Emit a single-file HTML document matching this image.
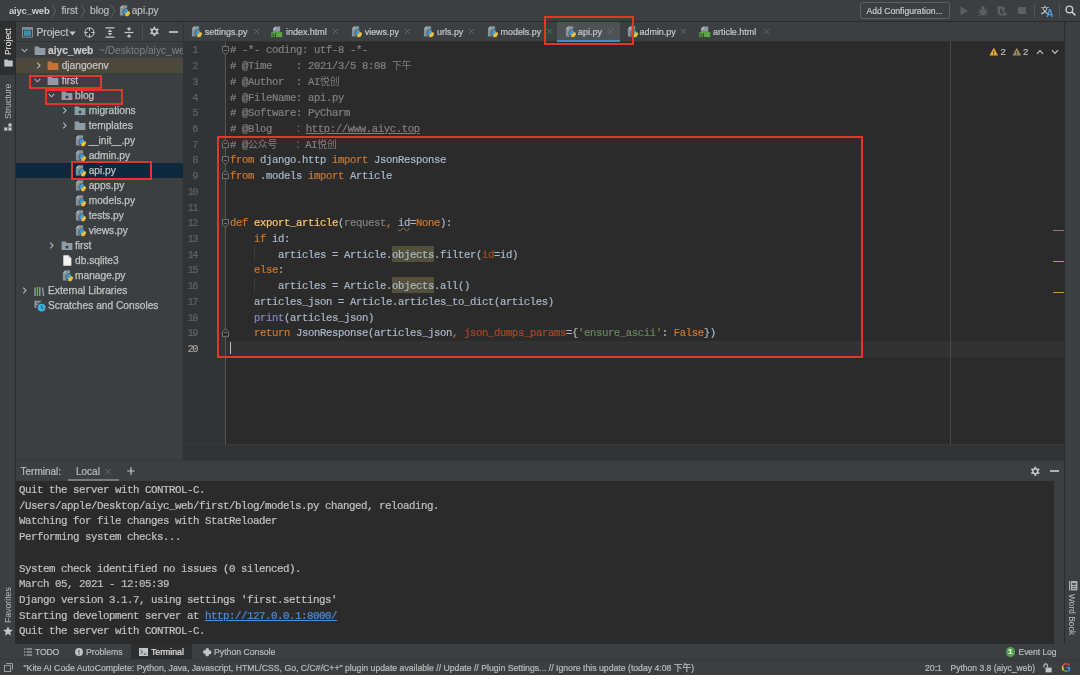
<!DOCTYPE html>
<html><head><meta charset="utf-8"><title>aiyc_web – api.py</title>
<style>
*{box-sizing:border-box;margin:0;padding:0}
html,body{width:1080px;height:675px;overflow:hidden;background:#3c3f41}
#app{position:absolute;left:0;top:0;width:1080px;height:675px;will-change:transform;background:#3c3f41;overflow:hidden}
body{position:relative;font-family:"Liberation Sans","Noto Sans CJK SC",sans-serif;font-size:10px;color:#bbbbbb}
.abs{position:absolute}
.mono{font-family:"Liberation Mono","Noto Sans CJK SC",monospace}
.t{position:absolute;white-space:pre;line-height:12px;height:12px;-webkit-text-stroke:0.2px currentColor}
svg{position:absolute;overflow:visible}
#nav{left:0;top:0;width:1080px;height:22px;background:#3c3f41;border-bottom:1px solid #2b2b2b}
#lstrip{left:0;top:22px;width:16px;height:622px;background:#3c3f41;border-right:1px solid #2b2b2b}
#rstrip{left:1064px;top:22px;width:16px;height:622px;background:#3c3f41;border-left:1px solid #2b2b2b}
.vt{position:absolute;white-space:nowrap;font-size:8.7px;line-height:10px;height:10px}
#proj{left:16px;top:22px;width:167px;height:438px;background:#3c3f41;overflow:hidden}
#pdiv{left:183px;top:22px;width:1px;height:438.5px;background:#313335}
.row{position:absolute;left:0;width:167px;height:15px}
.row .t{top:1.5px;font-size:10.2px;color:#c2c2c2;-webkit-text-stroke:0.25px #c2c2c2}
#tabs{left:184px;top:22px;width:880px;height:20px;background:#3c3f41;border-bottom:1px solid #323232}
.tab{position:absolute;top:0;height:19px}
.tab .t{top:4px;font-size:9.1px;color:#bbbbbb}
#editor{left:184px;top:42px;width:880px;height:402px;background:#2b2b2b;overflow:hidden}
#gutter{left:0;top:0;width:41px;height:402px;background:#313335}
#gline{left:41px;top:0;width:1px;height:402px;background:#555555}
.ln{position:absolute;left:0;width:12.9px;text-align:right;font-size:10.4px;letter-spacing:-1.5px;-webkit-text-stroke:0.2px currentColor;line-height:12px;color:#606366}
.cl{position:absolute;left:46px;font-size:10.6px;letter-spacing:-0.36px;line-height:12px;height:12px;white-space:pre;color:#a9b7c6;-webkit-text-stroke:0.2px currentColor}
.k{color:#cc7832}.c{color:#808080}.f{color:#ffc66d}.s{color:#6a8759}.a{color:#aa4926}.b{color:#8888c6}.g{color:#808080}
.z{font-size:9.8px;letter-spacing:0;-webkit-text-stroke:0}
.hl{background:#52503a;padding:2.7px 0 1.1px}
#ebot{left:184px;top:444px;width:880px;height:16.5px;background:#313335;border-top:1px solid #37393b}
#thead{left:16px;top:460px;width:1048px;height:21px;background:#3c3f41;border-top:1px solid #353739}
#term{left:16px;top:481px;width:1048px;height:163px;background:#2b2b2b}
.tl{position:absolute;left:3px;font-size:10.8px;letter-spacing:-0.48px;line-height:12px;height:12px;white-space:pre;color:#c0c0c0;-webkit-text-stroke:0.2px currentColor}
#tools{left:0;top:643.8px;width:1080px;height:16.2px;background:#3c3f41}
#tools .t{font-size:8.7px;top:1.8px}
#status{left:0;top:658.6px;width:1080px;height:16.4px;background:#3c3f41;border-top:1px solid #36383a}
#status .t{font-size:8.7px;top:2.1px}
.red{position:absolute;border:2.3px solid #e5352b}
</style></head><body><div id="app">
<div id="nav" class="abs">
<div class="t " style="left:9px;top:4.5px;font-size:9.4px;letter-spacing:-0.15px;font-weight:bold;color:#cfcfcf;-webkit-text-stroke:0">aiyc_web</div>
<div class="t " style="left:61.5px;top:4.5px;font-size:10.2px">first</div>
<div class="t " style="left:90px;top:4.5px;font-size:10.2px">blog</div>
<svg style="left:119.3px;top:5px" width="12" height="12" viewBox="0 0 12 12"><path d="M3.5 0.2 H8.1 V10.5 H0.9 V2.8 Z" fill="#87929a"/> <path d="M0.9 2.8 L3.5 0.2 V2.8 Z" fill="#b9c1c7"/> <g fill="#3c3f41" stroke="#3c3f41" stroke-width="1.2"><rect x="5.2" y="4.1" width="3.7" height="3.5" rx="1.2"/><rect x="4.2" y="5.8" width="3.1" height="3.3" rx="1.2"/><rect x="6.2" y="7.8" width="3.7" height="3.5" rx="1.2"/><rect x="7.8" y="6.3" width="3.1" height="3.3" rx="1.2"/></g> <g fill="#3d9ad3"><rect x="5.2" y="4.1" width="3.7" height="3.5" rx="1.2"/><rect x="4.2" y="5.8" width="3.1" height="3.3" rx="1.2"/></g> <g fill="#f0bf3a"><rect x="6.2" y="7.8" width="3.7" height="3.5" rx="1.2"/><rect x="7.8" y="6.3" width="3.1" height="3.3" rx="1.2"/></g></svg>
<div class="t " style="left:131.8px;top:4.5px;font-size:10px">api.py</div>
<svg style="left:51.3px;top:4px" width="6" height="14" viewBox="0 0 6 14"><path d="M1 0.8 L4.8 7 L1 13.2" stroke="#5f6365" stroke-width="0.9" fill="none"/></svg>
<svg style="left:79.8px;top:4px" width="6" height="14" viewBox="0 0 6 14"><path d="M1 0.8 L4.8 7 L1 13.2" stroke="#5f6365" stroke-width="0.9" fill="none"/></svg>
<svg style="left:109.5px;top:4px" width="6" height="14" viewBox="0 0 6 14"><path d="M1 0.8 L4.8 7 L1 13.2" stroke="#5f6365" stroke-width="0.9" fill="none"/></svg>
<div class="abs" style="left:860px;top:2.2px;width:90px;height:16.5px;border:1px solid #5e6162;border-radius:2.5px"></div>
<div class="t " style="left:866.5px;top:4.5px;font-size:8.65px;color:#c8c8c8">Add Configuration...</div>
<svg style="left:958px;top:5px" width="12" height="12" viewBox="0 0 12 12"><path d="M2.5 1.5 L10 6 L2.5 10.5Z" fill="#5d6062"/></svg>
<svg style="left:977px;top:5px" width="12" height="12" viewBox="0 0 12 12"><ellipse cx="6" cy="7" rx="2.8" ry="3.6" fill="#5d6062"/><circle cx="6" cy="2.8" r="1.7" fill="#5d6062"/><path d="M1 4.5l2.5 1.5M11 4.5l-2.5 1.5M0.8 7.5h2.6M11.2 7.5h-2.6M1.2 10.8l2.4-1.4M10.8 10.8l-2.4-1.4" stroke="#5d6062" stroke-width="0.9"/></svg>
<svg style="left:996px;top:5px" width="13" height="12" viewBox="0 0 13 12"><path d="M1.5 1.2h4.2l3 1.6v3.4h-2.6v-2.6h-2v5h2v2.2h-1.2q-3.4 -1.4 -3.4 -5z" fill="#5d6062"/><path d="M7 6.6l4.6 2.5-4.6 2.5z" fill="#5d6062"/></svg>
<div class="abs" style="left:1018.4px;top:6.8px;width:7.7px;height:7.5px;background:#5d6062"></div>
<div class="abs" style="left:1034px;top:4px;width:1px;height:14px;background:#515456"></div>
<div class="t " style="left:1040.8px;top:4.0px;font-size:8.4px;color:#c8cacb;font-family:"Liberation Sans","Noto Sans CJK SC",sans-serif;font-weight:bold;-webkit-text-stroke:0">文</div>
<div class="t " style="left:1046.3px;top:7.6px;font-size:10px;color:#4a9fe0;font-weight:bold;-webkit-text-stroke:0">A</div>
<div class="abs" style="left:1059px;top:4px;width:1px;height:14px;background:#515456"></div>
<svg style="left:1064.5px;top:5px" width="11" height="11" viewBox="0 0 11 11"><circle cx="4.4" cy="4.4" r="3.3" stroke="#c8cacb" stroke-width="1.4" fill="none"/><path d="M6.9 6.9L10.4 10.4" stroke="#c8cacb" stroke-width="1.6"/></svg>
</div>
<div id="lstrip" class="abs">
<div class="abs" style="left:0;top:0;width:15px;height:53px;background:#2d2f30"></div>
<div class="vt" style="left:2.7px;top:33px;color:#f0f0f0;transform-origin:0 0;transform:rotate(-90deg)">Project</div>
<svg style="left:3.5px;top:36.5px" width="9" height="8" viewBox="0 0 9 8"><path d="M0.3 0.4H3.4L4.3 1.5H8.7V7.6H0.3Z" fill="#c3c6c8"/></svg>
<div class="vt" style="left:2.7px;top:96.5px;color:#bbbbbb;transform-origin:0 0;transform:rotate(-90deg)">Structure</div>
<svg style="left:4px;top:100.5px" width="8" height="8" viewBox="0 0 8 8"><rect x="0.2" y="4.4" width="3.2" height="3.2" fill="#c3c6c8"/><rect x="4.4" y="4.4" width="3.2" height="3.2" fill="#c3c6c8"/><rect x="4.4" y="0.4" width="3.2" height="3.2" fill="#c3c6c8"/></svg>
<div class="vt" style="left:2.7px;top:600.5px;color:#bbbbbb;transform-origin:0 0;transform:rotate(-90deg)">Favorites</div>
<svg style="left:2.5px;top:603.5px" width="10" height="10" viewBox="0 0 10 10"><path d="M5 0.3L6.4 3.6L9.9 3.9L7.2 6.2L8 9.7L5 7.8L2 9.7L2.8 6.2L0.1 3.9L3.6 3.6Z" fill="#c3c6c8"/></svg>
</div>
<div id="rstrip" class="abs">
<svg style="left:3.9px;top:558.9px" width="8.4" height="9.4" viewBox="0 0 8.4 9.4"><rect x="0" y="0" width="1.1" height="9.4" fill="#afb1b3"/><rect x="1.8" y="0" width="6.6" height="9.4" fill="#afb1b3"/><rect x="3.1" y="2.2" width="3.7" height="1.6" fill="#3c3f41"/><rect x="3.1" y="5.3" width="3.7" height="0.7" fill="#3c3f41"/><rect x="3.1" y="7" width="3.7" height="0.7" fill="#3c3f41"/></svg>
<div class="vt" style="left:12.3px;top:572px;color:#bbbbbb;transform-origin:0 0;transform:rotate(90deg);font-size:8.4px">Word Book</div>
</div>
<div id="proj" class="abs">
<svg style="left:6px;top:4.5px" width="11" height="11" viewBox="0 0 11 11"><rect x="0.5" y="0.7" width="10" height="9.4" fill="#3c3f41" stroke="#87939a" stroke-width="0.9"/><rect x="0.5" y="0.7" width="10" height="2" fill="#87939a"/><rect x="1.9" y="3.4" width="7.2" height="5.4" fill="#3a8fb0"/></svg>
<div class="t " style="left:20.5px;top:4.8px;font-size:10.2px;color:#c4c4c4">Project</div>
<svg style="left:52.5px;top:9px" width="7" height="5" viewBox="0 0 7 5"><path d="M0.3 0.6H6.7L3.5 4.4Z" fill="#c3c6c8"/></svg>
<svg style="left:68px;top:4.5px" width="11" height="11" viewBox="0 0 11 11"><circle cx="5.5" cy="5.5" r="4.5" stroke="#c3c6c8" stroke-width="1.1" fill="none"/><path d="M5.5 0.5v3.2M5.5 7.3v3.2M0.5 5.5h3.2M7.3 5.5h3.2" stroke="#c3c6c8" stroke-width="1.1"/></svg>
<svg style="left:88.5px;top:4.5px" width="10" height="11" viewBox="0 0 10 11"><path d="M0.5 0.9h9M0.5 10.1h9" stroke="#c3c6c8" stroke-width="1.2"/><path d="M5 2.4L7.4 5H2.6ZM5 8.6L7.4 6H2.6Z" fill="#c3c6c8"/></svg>
<svg style="left:108px;top:4.5px" width="10" height="11" viewBox="0 0 10 11"><path d="M0.5 5.5h9" stroke="#c3c6c8" stroke-width="1.2"/><path d="M5 4L7.4 1.2H2.6ZM5 7L7.4 9.8H2.6Z" fill="#c3c6c8"/><path d="M5 0v2M5 9v2" stroke="#c3c6c8" stroke-width="1"/></svg>
<div class="abs" style="left:125.5px;top:3px;width:1px;height:14px;background:#515456"></div>
<div class="abs" style="left:0;top:19px;width:167px;height:1px;background:#323435"></div>
<svg style="left:132.6px;top:4.3px" width="10.8" height="10.8" viewBox="0 0 12 12"><g fill="#c3c6c8"> <circle cx="6" cy="6" r="3.6"/> <rect x="5" y="0.8" width="2" height="10.4"/> <rect x="5" y="0.8" width="2" height="10.4" transform="rotate(60 6 6)"/> <rect x="5" y="0.8" width="2" height="10.4" transform="rotate(120 6 6)"/> </g> <circle cx="6" cy="6" r="1.9" fill="#3c3f41"/></svg>
<div class="abs" style="left:153px;top:9px;width:9px;height:2px;background:#afb1b3"></div>
<div class="row" style="top:21px;">
<svg style="left:4px;top:3px" width="9" height="9" viewBox="0 0 10 10"><path d="M1.9 3.3 L5 6.4 L8.1 3.3" stroke="#b4b4b4" stroke-width="1.2" fill="none"/></svg>
<svg style="left:17.6px;top:1.6px" width="12" height="12" viewBox="0 0 12 12"><path d="M0.6 1.6 H4.6 L5.8 3 H11.4 V9.9 H0.6 Z" fill="#8f9ba5"/></svg>
<div class="t " style="left:32px;top:1.5px;"><b style="color:#c8c8c8">aiyc_web</b><span style="color:#808080;-webkit-text-stroke:0">  ~/Desktop/aiyc_we</span></div>
</div>
<div class="row" style="top:36px;background:#4c483c">
<svg style="left:18px;top:3px" width="9" height="9" viewBox="0 0 10 10"><path d="M3.6 1.9 L6.7 5 L3.6 8.1" stroke="#b4b4b4" stroke-width="1.2" fill="none"/></svg>
<svg style="left:31.1px;top:1.6px" width="12" height="12" viewBox="0 0 12 12"><path d="M0.6 1.6 H4.6 L5.8 3 H11.4 V9.9 H0.6 Z" fill="#c4713a"/></svg>
<div class="t " style="left:45.7px;top:1.5px;">djangoenv</div>
</div>
<div class="row" style="top:51px;">
<svg style="left:17px;top:3px" width="9" height="9" viewBox="0 0 10 10"><path d="M1.9 3.3 L5 6.4 L8.1 3.3" stroke="#b4b4b4" stroke-width="1.2" fill="none"/></svg>
<svg style="left:31.1px;top:1.6px" width="12" height="12" viewBox="0 0 12 12"><path d="M0.6 1.6 H4.6 L5.8 3 H11.4 V9.9 H0.6 Z" fill="#8f9ba5"/></svg>
<div class="t " style="left:45.7px;top:1.5px;">first</div>
</div>
<div class="row" style="top:66px;">
<svg style="left:31px;top:3px" width="9" height="9" viewBox="0 0 10 10"><path d="M1.9 3.3 L5 6.4 L8.1 3.3" stroke="#b4b4b4" stroke-width="1.2" fill="none"/></svg>
<svg style="left:45.1px;top:1.6px" width="12" height="12" viewBox="0 0 12 12"><path d="M0.6 1.6 H4.6 L5.8 3 H11.4 V9.9 H0.6 Z" fill="#8f9ba5"/> <circle cx="6" cy="6.9" r="1.5" fill="#3c3f41"/></svg>
<div class="t " style="left:59px;top:1.5px;">blog</div>
</div>
<div class="row" style="top:81px;">
<svg style="left:43.8px;top:3px" width="9" height="9" viewBox="0 0 10 10"><path d="M3.6 1.9 L6.7 5 L3.6 8.1" stroke="#b4b4b4" stroke-width="1.2" fill="none"/></svg>
<svg style="left:58.0px;top:1.6px" width="12" height="12" viewBox="0 0 12 12"><path d="M0.6 1.6 H4.6 L5.8 3 H11.4 V9.9 H0.6 Z" fill="#8f9ba5"/> <circle cx="6" cy="6.9" r="1.5" fill="#3c3f41"/></svg>
<div class="t " style="left:72.7px;top:1.5px;">migrations</div>
</div>
<div class="row" style="top:96px;">
<svg style="left:43.8px;top:3px" width="9" height="9" viewBox="0 0 10 10"><path d="M3.6 1.9 L6.7 5 L3.6 8.1" stroke="#b4b4b4" stroke-width="1.2" fill="none"/></svg>
<svg style="left:58.0px;top:1.6px" width="12" height="12" viewBox="0 0 12 12"><path d="M0.6 1.6 H4.6 L5.8 3 H11.4 V9.9 H0.6 Z" fill="#8f9ba5"/></svg>
<div class="t " style="left:72.7px;top:1.5px;">templates</div>
</div>
<div class="row" style="top:111px;">
<svg style="left:58.6px;top:2px" width="12" height="12" viewBox="0 0 12 12"><path d="M3.5 0.2 H8.1 V10.5 H0.9 V2.8 Z" fill="#87929a"/> <path d="M0.9 2.8 L3.5 0.2 V2.8 Z" fill="#b9c1c7"/> <g fill="#3c3f41" stroke="#3c3f41" stroke-width="1.2"><rect x="5.2" y="4.1" width="3.7" height="3.5" rx="1.2"/><rect x="4.2" y="5.8" width="3.1" height="3.3" rx="1.2"/><rect x="6.2" y="7.8" width="3.7" height="3.5" rx="1.2"/><rect x="7.8" y="6.3" width="3.1" height="3.3" rx="1.2"/></g> <g fill="#3d9ad3"><rect x="5.2" y="4.1" width="3.7" height="3.5" rx="1.2"/><rect x="4.2" y="5.8" width="3.1" height="3.3" rx="1.2"/></g> <g fill="#f0bf3a"><rect x="6.2" y="7.8" width="3.7" height="3.5" rx="1.2"/><rect x="7.8" y="6.3" width="3.1" height="3.3" rx="1.2"/></g></svg>
<div class="t " style="left:72.7px;top:1.5px;"><span style="letter-spacing:-1.5px">__</span><span style="padding-left:1.5px">init</span><span style="letter-spacing:-1.5px">__</span><span style="padding-left:1.5px">.py</span></div>
</div>
<div class="row" style="top:126px;">
<svg style="left:58.6px;top:2px" width="12" height="12" viewBox="0 0 12 12"><path d="M3.5 0.2 H8.1 V10.5 H0.9 V2.8 Z" fill="#87929a"/> <path d="M0.9 2.8 L3.5 0.2 V2.8 Z" fill="#b9c1c7"/> <g fill="#3c3f41" stroke="#3c3f41" stroke-width="1.2"><rect x="5.2" y="4.1" width="3.7" height="3.5" rx="1.2"/><rect x="4.2" y="5.8" width="3.1" height="3.3" rx="1.2"/><rect x="6.2" y="7.8" width="3.7" height="3.5" rx="1.2"/><rect x="7.8" y="6.3" width="3.1" height="3.3" rx="1.2"/></g> <g fill="#3d9ad3"><rect x="5.2" y="4.1" width="3.7" height="3.5" rx="1.2"/><rect x="4.2" y="5.8" width="3.1" height="3.3" rx="1.2"/></g> <g fill="#f0bf3a"><rect x="6.2" y="7.8" width="3.7" height="3.5" rx="1.2"/><rect x="7.8" y="6.3" width="3.1" height="3.3" rx="1.2"/></g></svg>
<div class="t " style="left:72.7px;top:1.5px;">admin.py</div>
</div>
<div class="row" style="top:141px;background:#0d293e">
<svg style="left:58.6px;top:2px" width="12" height="12" viewBox="0 0 12 12"><path d="M3.5 0.2 H8.1 V10.5 H0.9 V2.8 Z" fill="#87929a"/> <path d="M0.9 2.8 L3.5 0.2 V2.8 Z" fill="#b9c1c7"/> <g fill="#3c3f41" stroke="#3c3f41" stroke-width="1.2"><rect x="5.2" y="4.1" width="3.7" height="3.5" rx="1.2"/><rect x="4.2" y="5.8" width="3.1" height="3.3" rx="1.2"/><rect x="6.2" y="7.8" width="3.7" height="3.5" rx="1.2"/><rect x="7.8" y="6.3" width="3.1" height="3.3" rx="1.2"/></g> <g fill="#3d9ad3"><rect x="5.2" y="4.1" width="3.7" height="3.5" rx="1.2"/><rect x="4.2" y="5.8" width="3.1" height="3.3" rx="1.2"/></g> <g fill="#f0bf3a"><rect x="6.2" y="7.8" width="3.7" height="3.5" rx="1.2"/><rect x="7.8" y="6.3" width="3.1" height="3.3" rx="1.2"/></g></svg>
<div class="t " style="left:72.7px;top:1.5px;">api.py</div>
</div>
<div class="row" style="top:156px;">
<svg style="left:58.6px;top:2px" width="12" height="12" viewBox="0 0 12 12"><path d="M3.5 0.2 H8.1 V10.5 H0.9 V2.8 Z" fill="#87929a"/> <path d="M0.9 2.8 L3.5 0.2 V2.8 Z" fill="#b9c1c7"/> <g fill="#3c3f41" stroke="#3c3f41" stroke-width="1.2"><rect x="5.2" y="4.1" width="3.7" height="3.5" rx="1.2"/><rect x="4.2" y="5.8" width="3.1" height="3.3" rx="1.2"/><rect x="6.2" y="7.8" width="3.7" height="3.5" rx="1.2"/><rect x="7.8" y="6.3" width="3.1" height="3.3" rx="1.2"/></g> <g fill="#3d9ad3"><rect x="5.2" y="4.1" width="3.7" height="3.5" rx="1.2"/><rect x="4.2" y="5.8" width="3.1" height="3.3" rx="1.2"/></g> <g fill="#f0bf3a"><rect x="6.2" y="7.8" width="3.7" height="3.5" rx="1.2"/><rect x="7.8" y="6.3" width="3.1" height="3.3" rx="1.2"/></g></svg>
<div class="t " style="left:72.7px;top:1.5px;">apps.py</div>
</div>
<div class="row" style="top:171px;">
<svg style="left:58.6px;top:2px" width="12" height="12" viewBox="0 0 12 12"><path d="M3.5 0.2 H8.1 V10.5 H0.9 V2.8 Z" fill="#87929a"/> <path d="M0.9 2.8 L3.5 0.2 V2.8 Z" fill="#b9c1c7"/> <g fill="#3c3f41" stroke="#3c3f41" stroke-width="1.2"><rect x="5.2" y="4.1" width="3.7" height="3.5" rx="1.2"/><rect x="4.2" y="5.8" width="3.1" height="3.3" rx="1.2"/><rect x="6.2" y="7.8" width="3.7" height="3.5" rx="1.2"/><rect x="7.8" y="6.3" width="3.1" height="3.3" rx="1.2"/></g> <g fill="#3d9ad3"><rect x="5.2" y="4.1" width="3.7" height="3.5" rx="1.2"/><rect x="4.2" y="5.8" width="3.1" height="3.3" rx="1.2"/></g> <g fill="#f0bf3a"><rect x="6.2" y="7.8" width="3.7" height="3.5" rx="1.2"/><rect x="7.8" y="6.3" width="3.1" height="3.3" rx="1.2"/></g></svg>
<div class="t " style="left:72.7px;top:1.5px;">models.py</div>
</div>
<div class="row" style="top:186px;">
<svg style="left:58.6px;top:2px" width="12" height="12" viewBox="0 0 12 12"><path d="M3.5 0.2 H8.1 V10.5 H0.9 V2.8 Z" fill="#87929a"/> <path d="M0.9 2.8 L3.5 0.2 V2.8 Z" fill="#b9c1c7"/> <g fill="#3c3f41" stroke="#3c3f41" stroke-width="1.2"><rect x="5.2" y="4.1" width="3.7" height="3.5" rx="1.2"/><rect x="4.2" y="5.8" width="3.1" height="3.3" rx="1.2"/><rect x="6.2" y="7.8" width="3.7" height="3.5" rx="1.2"/><rect x="7.8" y="6.3" width="3.1" height="3.3" rx="1.2"/></g> <g fill="#3d9ad3"><rect x="5.2" y="4.1" width="3.7" height="3.5" rx="1.2"/><rect x="4.2" y="5.8" width="3.1" height="3.3" rx="1.2"/></g> <g fill="#f0bf3a"><rect x="6.2" y="7.8" width="3.7" height="3.5" rx="1.2"/><rect x="7.8" y="6.3" width="3.1" height="3.3" rx="1.2"/></g></svg>
<div class="t " style="left:72.7px;top:1.5px;">tests.py</div>
</div>
<div class="row" style="top:201px;">
<svg style="left:58.6px;top:2px" width="12" height="12" viewBox="0 0 12 12"><path d="M3.5 0.2 H8.1 V10.5 H0.9 V2.8 Z" fill="#87929a"/> <path d="M0.9 2.8 L3.5 0.2 V2.8 Z" fill="#b9c1c7"/> <g fill="#3c3f41" stroke="#3c3f41" stroke-width="1.2"><rect x="5.2" y="4.1" width="3.7" height="3.5" rx="1.2"/><rect x="4.2" y="5.8" width="3.1" height="3.3" rx="1.2"/><rect x="6.2" y="7.8" width="3.7" height="3.5" rx="1.2"/><rect x="7.8" y="6.3" width="3.1" height="3.3" rx="1.2"/></g> <g fill="#3d9ad3"><rect x="5.2" y="4.1" width="3.7" height="3.5" rx="1.2"/><rect x="4.2" y="5.8" width="3.1" height="3.3" rx="1.2"/></g> <g fill="#f0bf3a"><rect x="6.2" y="7.8" width="3.7" height="3.5" rx="1.2"/><rect x="7.8" y="6.3" width="3.1" height="3.3" rx="1.2"/></g></svg>
<div class="t " style="left:72.7px;top:1.5px;">views.py</div>
</div>
<div class="row" style="top:216px;">
<svg style="left:31px;top:3px" width="9" height="9" viewBox="0 0 10 10"><path d="M3.6 1.9 L6.7 5 L3.6 8.1" stroke="#b4b4b4" stroke-width="1.2" fill="none"/></svg>
<svg style="left:45.1px;top:1.6px" width="12" height="12" viewBox="0 0 12 12"><path d="M0.6 1.6 H4.6 L5.8 3 H11.4 V9.9 H0.6 Z" fill="#8f9ba5"/> <circle cx="6" cy="6.9" r="1.5" fill="#3c3f41"/></svg>
<div class="t " style="left:59px;top:1.5px;">first</div>
</div>
<div class="row" style="top:231px;">
<svg style="left:45.6px;top:1.6px" width="11" height="11" viewBox="0 0 12 12"><path d="M1.4 0.4 H7.2 L10.2 3.4 V11.6 H1.4 Z" fill="#f2f2f2"/> <path d="M7.2 0.4 L10.2 3.4 H7.2 Z" fill="#a9adb0"/></svg>
<div class="t " style="left:59px;top:1.5px;">db.sqlite3</div>
</div>
<div class="row" style="top:246px;">
<svg style="left:46px;top:2px" width="12" height="12" viewBox="0 0 12 12"><path d="M3.5 0.2 H8.1 V10.5 H0.9 V2.8 Z" fill="#87929a"/> <path d="M0.9 2.8 L3.5 0.2 V2.8 Z" fill="#b9c1c7"/> <g fill="#3c3f41" stroke="#3c3f41" stroke-width="1.2"><rect x="5.2" y="4.1" width="3.7" height="3.5" rx="1.2"/><rect x="4.2" y="5.8" width="3.1" height="3.3" rx="1.2"/><rect x="6.2" y="7.8" width="3.7" height="3.5" rx="1.2"/><rect x="7.8" y="6.3" width="3.1" height="3.3" rx="1.2"/></g> <g fill="#3d9ad3"><rect x="5.2" y="4.1" width="3.7" height="3.5" rx="1.2"/><rect x="4.2" y="5.8" width="3.1" height="3.3" rx="1.2"/></g> <g fill="#f0bf3a"><rect x="6.2" y="7.8" width="3.7" height="3.5" rx="1.2"/><rect x="7.8" y="6.3" width="3.1" height="3.3" rx="1.2"/></g></svg>
<div class="t " style="left:59px;top:1.5px;">manage.py</div>
</div>
<div class="row" style="top:261px;">
<svg style="left:4px;top:3px" width="9" height="9" viewBox="0 0 10 10"><path d="M3.6 1.9 L6.7 5 L3.6 8.1" stroke="#b4b4b4" stroke-width="1.2" fill="none"/></svg>
<svg style="left:18px;top:2.5px" width="11" height="10" viewBox="0 0 11 10"><path d="M1 1.5v8.5M5.8 1v9" stroke="#8f9ba5" stroke-width="1.4"/><path d="M3.4 0.8v9.2" stroke="#62b543" stroke-width="1.4"/><path d="M8.5 1.6l1.1 8.4" stroke="#8f9ba5" stroke-width="1.4"/></svg>
<div class="t " style="left:32px;top:1.5px;">External Libraries</div>
</div>
<div class="row" style="top:276px;">
<svg style="left:18px;top:2px" width="12" height="12" viewBox="0 0 12 12"><path d="M0.5 0.8h7.2L6 2.4H2.2v1.2H5l-1.4 1.5H2.2v1.2h1L2 7.8H0.5Z" fill="#8f9ba5"/><circle cx="7.6" cy="7.6" r="3.9" fill="#3bb3e6"/><path d="M7.6 5.4v2.4l1.6 1" stroke="#23323c" stroke-width="0.9" fill="none"/></svg>
<div class="t " style="left:32px;top:1.5px;">Scratches and Consoles</div>
</div>
</div>
<div id="pdiv" class="abs"></div>
<div id="tabs" class="abs">
<div class="abs" style="left:373px;top:0;width:63px;height:19px;background:#4e5254"></div>
<div class="abs" style="left:373px;top:17.5px;width:63px;height:2px;background:#4a88c7"></div>
<svg style="left:7.3px;top:3.7px" width="12" height="12" viewBox="0 0 12 12"><path d="M3.5 0.2 H8.1 V10.5 H0.9 V2.8 Z" fill="#87929a"/> <path d="M0.9 2.8 L3.5 0.2 V2.8 Z" fill="#b9c1c7"/> <g fill="#3c3f41" stroke="#3c3f41" stroke-width="1.2"><rect x="5.2" y="4.1" width="3.7" height="3.5" rx="1.2"/><rect x="4.2" y="5.8" width="3.1" height="3.3" rx="1.2"/><rect x="6.2" y="7.8" width="3.7" height="3.5" rx="1.2"/><rect x="7.8" y="6.3" width="3.1" height="3.3" rx="1.2"/></g> <g fill="#3d9ad3"><rect x="5.2" y="4.1" width="3.7" height="3.5" rx="1.2"/><rect x="4.2" y="5.8" width="3.1" height="3.3" rx="1.2"/></g> <g fill="#f0bf3a"><rect x="6.2" y="7.8" width="3.7" height="3.5" rx="1.2"/><rect x="7.8" y="6.3" width="3.1" height="3.3" rx="1.2"/></g></svg>
<div class="t " style="left:20.7px;top:3.6px;font-size:8.95px;color:#c6c6c6">settings.py</div>
<svg style="left:69.4px;top:6.2px" width="7" height="7" viewBox="0 0 8 8"><path d="M1 1 L7 7 M7 1 L1 7" stroke="#6e7173" stroke-width="0.9" fill="none"/></svg>
<svg style="left:87.2px;top:3.7px" width="11.5" height="11.5" viewBox="0 0 12 12"><path d="M4.6 0.4 H9.6 V6 H2 V3 Z" fill="#8f9aa3"/> <path d="M2 3 L4.6 0.4 V3 Z" fill="#c4ccd2"/> <rect x="0.3" y="6.3" width="11.4" height="5.3" fill="#5aa544"/> <text x="1.3" y="11.1" font-family="Liberation Sans,sans-serif" font-weight="bold" font-size="6" fill="#1f4a19">H</text></svg>
<div class="t " style="left:102px;top:3.6px;font-size:8.95px;color:#c6c6c6">index.html</div>
<svg style="left:148.0px;top:6.2px" width="7" height="7" viewBox="0 0 8 8"><path d="M1 1 L7 7 M7 1 L1 7" stroke="#6e7173" stroke-width="0.9" fill="none"/></svg>
<svg style="left:167.2px;top:3.7px" width="12" height="12" viewBox="0 0 12 12"><path d="M3.5 0.2 H8.1 V10.5 H0.9 V2.8 Z" fill="#87929a"/> <path d="M0.9 2.8 L3.5 0.2 V2.8 Z" fill="#b9c1c7"/> <g fill="#3c3f41" stroke="#3c3f41" stroke-width="1.2"><rect x="5.2" y="4.1" width="3.7" height="3.5" rx="1.2"/><rect x="4.2" y="5.8" width="3.1" height="3.3" rx="1.2"/><rect x="6.2" y="7.8" width="3.7" height="3.5" rx="1.2"/><rect x="7.8" y="6.3" width="3.1" height="3.3" rx="1.2"/></g> <g fill="#3d9ad3"><rect x="5.2" y="4.1" width="3.7" height="3.5" rx="1.2"/><rect x="4.2" y="5.8" width="3.1" height="3.3" rx="1.2"/></g> <g fill="#f0bf3a"><rect x="6.2" y="7.8" width="3.7" height="3.5" rx="1.2"/><rect x="7.8" y="6.3" width="3.1" height="3.3" rx="1.2"/></g></svg>
<div class="t " style="left:180.7px;top:3.6px;font-size:8.95px;color:#c6c6c6">views.py</div>
<svg style="left:219.8px;top:6.2px" width="7" height="7" viewBox="0 0 8 8"><path d="M1 1 L7 7 M7 1 L1 7" stroke="#6e7173" stroke-width="0.9" fill="none"/></svg>
<svg style="left:239.1px;top:3.7px" width="12" height="12" viewBox="0 0 12 12"><path d="M3.5 0.2 H8.1 V10.5 H0.9 V2.8 Z" fill="#87929a"/> <path d="M0.9 2.8 L3.5 0.2 V2.8 Z" fill="#b9c1c7"/> <g fill="#3c3f41" stroke="#3c3f41" stroke-width="1.2"><rect x="5.2" y="4.1" width="3.7" height="3.5" rx="1.2"/><rect x="4.2" y="5.8" width="3.1" height="3.3" rx="1.2"/><rect x="6.2" y="7.8" width="3.7" height="3.5" rx="1.2"/><rect x="7.8" y="6.3" width="3.1" height="3.3" rx="1.2"/></g> <g fill="#3d9ad3"><rect x="5.2" y="4.1" width="3.7" height="3.5" rx="1.2"/><rect x="4.2" y="5.8" width="3.1" height="3.3" rx="1.2"/></g> <g fill="#f0bf3a"><rect x="6.2" y="7.8" width="3.7" height="3.5" rx="1.2"/><rect x="7.8" y="6.3" width="3.1" height="3.3" rx="1.2"/></g></svg>
<div class="t " style="left:253px;top:3.6px;font-size:8.95px;color:#c6c6c6">urls.py</div>
<svg style="left:283.7px;top:6.2px" width="7" height="7" viewBox="0 0 8 8"><path d="M1 1 L7 7 M7 1 L1 7" stroke="#6e7173" stroke-width="0.9" fill="none"/></svg>
<svg style="left:302.6px;top:3.7px" width="12" height="12" viewBox="0 0 12 12"><path d="M3.5 0.2 H8.1 V10.5 H0.9 V2.8 Z" fill="#87929a"/> <path d="M0.9 2.8 L3.5 0.2 V2.8 Z" fill="#b9c1c7"/> <g fill="#3c3f41" stroke="#3c3f41" stroke-width="1.2"><rect x="5.2" y="4.1" width="3.7" height="3.5" rx="1.2"/><rect x="4.2" y="5.8" width="3.1" height="3.3" rx="1.2"/><rect x="6.2" y="7.8" width="3.7" height="3.5" rx="1.2"/><rect x="7.8" y="6.3" width="3.1" height="3.3" rx="1.2"/></g> <g fill="#3d9ad3"><rect x="5.2" y="4.1" width="3.7" height="3.5" rx="1.2"/><rect x="4.2" y="5.8" width="3.1" height="3.3" rx="1.2"/></g> <g fill="#f0bf3a"><rect x="6.2" y="7.8" width="3.7" height="3.5" rx="1.2"/><rect x="7.8" y="6.3" width="3.1" height="3.3" rx="1.2"/></g></svg>
<div class="t " style="left:316.5px;top:3.6px;font-size:8.95px;color:#c6c6c6">models.py</div>
<svg style="left:361.8px;top:6.2px" width="7" height="7" viewBox="0 0 8 8"><path d="M1 1 L7 7 M7 1 L1 7" stroke="#6e7173" stroke-width="0.9" fill="none"/></svg>
<svg style="left:381.0px;top:3.7px" width="12" height="12" viewBox="0 0 12 12"><path d="M3.5 0.2 H8.1 V10.5 H0.9 V2.8 Z" fill="#87929a"/> <path d="M0.9 2.8 L3.5 0.2 V2.8 Z" fill="#b9c1c7"/> <g fill="#3c3f41" stroke="#3c3f41" stroke-width="1.2"><rect x="5.2" y="4.1" width="3.7" height="3.5" rx="1.2"/><rect x="4.2" y="5.8" width="3.1" height="3.3" rx="1.2"/><rect x="6.2" y="7.8" width="3.7" height="3.5" rx="1.2"/><rect x="7.8" y="6.3" width="3.1" height="3.3" rx="1.2"/></g> <g fill="#3d9ad3"><rect x="5.2" y="4.1" width="3.7" height="3.5" rx="1.2"/><rect x="4.2" y="5.8" width="3.1" height="3.3" rx="1.2"/></g> <g fill="#f0bf3a"><rect x="6.2" y="7.8" width="3.7" height="3.5" rx="1.2"/><rect x="7.8" y="6.3" width="3.1" height="3.3" rx="1.2"/></g></svg>
<div class="t " style="left:394px;top:3.6px;font-size:8.95px;color:#c6c6c6">api.py</div>
<svg style="left:423.2px;top:6.2px" width="7" height="7" viewBox="0 0 8 8"><path d="M1 1 L7 7 M7 1 L1 7" stroke="#6e7173" stroke-width="0.9" fill="none"/></svg>
<svg style="left:442.6px;top:3.7px" width="12" height="12" viewBox="0 0 12 12"><path d="M3.5 0.2 H8.1 V10.5 H0.9 V2.8 Z" fill="#87929a"/> <path d="M0.9 2.8 L3.5 0.2 V2.8 Z" fill="#b9c1c7"/> <g fill="#3c3f41" stroke="#3c3f41" stroke-width="1.2"><rect x="5.2" y="4.1" width="3.7" height="3.5" rx="1.2"/><rect x="4.2" y="5.8" width="3.1" height="3.3" rx="1.2"/><rect x="6.2" y="7.8" width="3.7" height="3.5" rx="1.2"/><rect x="7.8" y="6.3" width="3.1" height="3.3" rx="1.2"/></g> <g fill="#3d9ad3"><rect x="5.2" y="4.1" width="3.7" height="3.5" rx="1.2"/><rect x="4.2" y="5.8" width="3.1" height="3.3" rx="1.2"/></g> <g fill="#f0bf3a"><rect x="6.2" y="7.8" width="3.7" height="3.5" rx="1.2"/><rect x="7.8" y="6.3" width="3.1" height="3.3" rx="1.2"/></g></svg>
<div class="t " style="left:455.5px;top:3.6px;font-size:8.95px;color:#c6c6c6">admin.py</div>
<svg style="left:496.4px;top:6.2px" width="7" height="7" viewBox="0 0 8 8"><path d="M1 1 L7 7 M7 1 L1 7" stroke="#6e7173" stroke-width="0.9" fill="none"/></svg>
<svg style="left:515.4px;top:3.7px" width="11.5" height="11.5" viewBox="0 0 12 12"><path d="M4.6 0.4 H9.6 V6 H2 V3 Z" fill="#8f9aa3"/> <path d="M2 3 L4.6 0.4 V3 Z" fill="#c4ccd2"/> <rect x="0.3" y="6.3" width="11.4" height="5.3" fill="#5aa544"/> <text x="1.3" y="11.1" font-family="Liberation Sans,sans-serif" font-weight="bold" font-size="6" fill="#1f4a19">H</text></svg>
<div class="t " style="left:529px;top:3.6px;font-size:8.95px;color:#c6c6c6">article.html</div>
<svg style="left:578.7px;top:6.2px" width="7" height="7" viewBox="0 0 8 8"><path d="M1 1 L7 7 M7 1 L1 7" stroke="#6e7173" stroke-width="0.9" fill="none"/></svg>
</div>
<div id="editor" class="abs mono">
<div class="abs" style="left:42px;top:298.68px;width:838px;height:16.12px;background:#323232"></div>
<div id="gutter" class="abs"></div><div id="gline" class="abs"></div>
<div class="abs" style="left:766px;top:0;width:1px;height:402px;background:#484848"></div>
<div class="ln" style="top:2.36px;color:#606366">1</div>
<div class="cl" style="top:2.36px"><span class="c"># -*- coding: utf-8 -*-</span></div>
<div class="ln" style="top:18.08px;color:#606366">2</div>
<div class="cl" style="top:18.08px"><span class="c"># @Time    : 2021/3/5 8:08 <span class="z">下午</span></span></div>
<div class="ln" style="top:33.80px;color:#606366">3</div>
<div class="cl" style="top:33.80px"><span class="c"># @Author  : AI<span class="z">悦创</span></span></div>
<div class="ln" style="top:49.52px;color:#606366">4</div>
<div class="cl" style="top:49.52px"><span class="c"># @FileName: api.py</span></div>
<div class="ln" style="top:65.24px;color:#606366">5</div>
<div class="cl" style="top:65.24px"><span class="c"># @Software: PyCharm</span></div>
<div class="ln" style="top:80.96px;color:#606366">6</div>
<div class="cl" style="top:80.96px"><span class="c"># @Blog    <span class="z">：</span><u>http://www.aiyc.top</u></span></div>
<div class="ln" style="top:96.68px;color:#606366">7</div>
<div class="cl" style="top:96.68px"><span class="c"># @<span class="z">公众号</span>   <span class="z">：</span>AI<span class="z">悦创</span></span></div>
<div class="ln" style="top:112.40px;color:#606366">8</div>
<div class="cl" style="top:112.40px"><span class="k">from</span> django.http <span class="k">import</span> JsonResponse</div>
<div class="ln" style="top:128.12px;color:#606366">9</div>
<div class="cl" style="top:128.12px"><span class="k">from</span> .models <span class="k">import</span> Article</div>
<div class="ln" style="top:143.84px;color:#606366">10</div>
<div class="ln" style="top:159.56px;color:#606366">11</div>
<div class="ln" style="top:175.28px;color:#606366">12</div>
<div class="cl" style="top:175.28px"><span class="k">def</span> <span class="f">export_article</span>(<span class="g">request</span><span class="k">,</span> <span style="text-decoration:underline wavy #6a6a4a">id</span>=<span class="k">None</span>):</div>
<div class="ln" style="top:191.00px;color:#606366">13</div>
<div class="cl" style="top:191.00px">    <span class="k">if</span> id:</div>
<div class="ln" style="top:206.72px;color:#606366">14</div>
<div class="cl" style="top:206.72px">        articles = Article.<span class="hl">objects</span>.filter(<span class="a">id</span>=id)</div>
<div class="ln" style="top:222.44px;color:#606366">15</div>
<div class="cl" style="top:222.44px">    <span class="k">else</span>:</div>
<div class="ln" style="top:238.16px;color:#606366">16</div>
<div class="cl" style="top:238.16px">        articles = Article.<span class="hl">objects</span>.all()</div>
<div class="ln" style="top:253.88px;color:#606366">17</div>
<div class="cl" style="top:253.88px">    articles_json = Article.articles_to_dict(articles)</div>
<div class="ln" style="top:269.60px;color:#606366">18</div>
<div class="cl" style="top:269.60px">    <span class="b">print</span>(articles_json)</div>
<div class="ln" style="top:285.32px;color:#606366">19</div>
<div class="cl" style="top:285.32px">    <span class="k">return</span> JsonResponse(articles_json<span class="k">,</span> <span class="a">json_dumps_params</span>={<span class="s">'ensure_ascii'</span>: <span class="k">False</span>})</div>
<div class="ln" style="top:301.04px;color:#a4a3a3">20</div>
<div class="abs" style="left:46px;top:300.18px;width:1.3px;height:12px;background:#bbbbbb"></div>
<div class="abs" style="left:70px;top:204.36px;width:1px;height:15.72px;background:#3b3b3b"></div>
<div class="abs" style="left:70px;top:235.80px;width:1px;height:15.72px;background:#3b3b3b"></div>
<svg style="left:38px;top:4.26px" width="7" height="9.2" viewBox="0 0 7 8.5" preserveAspectRatio="none"><path d="M0.5 0.5H6.5V5L3.5 8L0.5 5Z" fill="#2b2b2b" stroke="#777a7c" stroke-width="0.9"/><path d="M2 4.2h3" stroke="#777a7c" stroke-width="0.9"/></svg>
<svg style="left:38px;top:96.98px" width="7" height="9.2" viewBox="0 0 7 8.5" preserveAspectRatio="none"><path d="M0.5 8H6.5V3.5L3.5 0.5L0.5 3.5Z" fill="#2b2b2b" stroke="#777a7c" stroke-width="0.9"/><path d="M2 4.2h3" stroke="#777a7c" stroke-width="0.9"/></svg>
<svg style="left:38px;top:114.30px" width="7" height="9.2" viewBox="0 0 7 8.5" preserveAspectRatio="none"><path d="M0.5 0.5H6.5V5L3.5 8L0.5 5Z" fill="#2b2b2b" stroke="#777a7c" stroke-width="0.9"/><path d="M2 4.2h3" stroke="#777a7c" stroke-width="0.9"/></svg>
<svg style="left:38px;top:128.42px" width="7" height="9.2" viewBox="0 0 7 8.5" preserveAspectRatio="none"><path d="M0.5 8H6.5V3.5L3.5 0.5L0.5 3.5Z" fill="#2b2b2b" stroke="#777a7c" stroke-width="0.9"/><path d="M2 4.2h3" stroke="#777a7c" stroke-width="0.9"/></svg>
<svg style="left:38px;top:177.18px" width="7" height="9.2" viewBox="0 0 7 8.5" preserveAspectRatio="none"><path d="M0.5 0.5H6.5V5L3.5 8L0.5 5Z" fill="#2b2b2b" stroke="#777a7c" stroke-width="0.9"/><path d="M2 4.2h3" stroke="#777a7c" stroke-width="0.9"/></svg>
<svg style="left:38px;top:285.62px" width="7" height="9.2" viewBox="0 0 7 8.5" preserveAspectRatio="none"><path d="M0.5 8H6.5V3.5L3.5 0.5L0.5 3.5Z" fill="#2b2b2b" stroke="#777a7c" stroke-width="0.9"/><path d="M2 4.2h3" stroke="#777a7c" stroke-width="0.9"/></svg>
<svg style="left:805px;top:4.6px" width="9.6" height="9.6" viewBox="0 0 12 12"><path d="M6 1 L11.4 10.6 H0.6 Z" fill="#e4a936"/> <text x="6" y="9.8" text-anchor="middle" font-family="Liberation Sans,sans-serif" font-weight="bold" font-size="7.4" fill="#2b2b2b">!</text></svg>
<div class="t " style="left:816.5px;top:3.7px;font-family:'Liberation Sans',sans-serif;font-size:9.6px;color:#bbbbbb">2</div>
<svg style="left:828px;top:4.6px" width="9.6" height="9.6" viewBox="0 0 12 12"><path d="M6 1 L11.4 10.6 H0.6 Z" fill="#9a8a62"/> <text x="6" y="9.8" text-anchor="middle" font-family="Liberation Sans,sans-serif" font-weight="bold" font-size="7.4" fill="#2b2b2b">!</text></svg>
<div class="t " style="left:839px;top:3.7px;font-family:'Liberation Sans',sans-serif;font-size:9.6px;color:#bbbbbb">2</div>
<svg style="left:851.5px;top:6.8px" width="8" height="6" viewBox="0 0 8 6"><path d="M1 4.8L4 1.6L7 4.8" stroke="#c3c6c8" stroke-width="1.2" fill="none"/></svg>
<svg style="left:867.3px;top:7.3px" width="8" height="6" viewBox="0 0 8 6"><path d="M1 1.2L4 4.4L7 1.2" stroke="#c3c6c8" stroke-width="1.2" fill="none"/></svg>
<div class="abs" style="left:869px;top:187.5px;width:11px;height:1.3px;background:#8c7f5d"></div>
<div class="abs" style="left:869px;top:218.5px;width:11px;height:1.3px;background:#c99a2e"></div>
<div class="abs" style="left:869px;top:249.5px;width:11px;height:1.3px;background:#c99a2e"></div>
</div>
<div id="ebot" class="abs"></div>
<div id="thead" class="abs">
<div class="t " style="left:4.5px;top:4.5px;font-size:10px;color:#bbbbbb">Terminal:</div>
<div class="t " style="left:60px;top:4.5px;font-size:10px;color:#bbbbbb">Local</div>
<svg style="left:88.3px;top:6.8px" width="7.5" height="7.5" viewBox="0 0 8 8"><path d="M1 1 L7 7 M7 1 L1 7" stroke="#6e7173" stroke-width="0.9" fill="none"/></svg>
<div class="abs" style="left:51.5px;top:17.5px;width:51.5px;height:2.5px;background:#747a80"></div>
<svg style="left:110.5px;top:6px" width="8" height="8" viewBox="0 0 8 8"><path d="M4 0.3v7.4M0.3 4h7.4" stroke="#c3c6c8" stroke-width="1.2"/></svg>
<svg style="left:1013.6px;top:4.6px" width="10.6" height="10.6" viewBox="0 0 12 12"><g fill="#c3c6c8"> <circle cx="6" cy="6" r="3.6"/> <rect x="5" y="0.8" width="2" height="10.4"/> <rect x="5" y="0.8" width="2" height="10.4" transform="rotate(60 6 6)"/> <rect x="5" y="0.8" width="2" height="10.4" transform="rotate(120 6 6)"/> </g> <circle cx="6" cy="6" r="1.9" fill="#3c3f41"/></svg>
<div class="abs" style="left:1034px;top:9px;width:9px;height:2px;background:#afb1b3"></div>
</div>
<div id="term" class="abs mono">
<div class="tl" style="top:3.10px">Quit the server with CONTROL-C.</div>
<div class="tl" style="top:18.78px">/Users/apple/Desktop/aiyc_web/first/blog/models.py changed, reloading.</div>
<div class="tl" style="top:34.46px">Watching for file changes with StatReloader</div>
<div class="tl" style="top:50.14px">Performing system checks...</div>
<div class="tl" style="top:81.50px">System check identified no issues (0 silenced).</div>
<div class="tl" style="top:97.18px">March 05, 2021 - 12:05:39</div>
<div class="tl" style="top:112.86px">Django version 3.1.7, using settings 'first.settings'</div>
<div class="tl" style="top:128.54px">Starting development server at <span style="color:#4a8fe0;text-decoration:underline">http://127.0.0.1:8000/</span></div>
<div class="tl" style="top:144.22px">Quit the server with CONTROL-C.</div>
<div class="abs" style="left:1038px;top:0;width:10px;height:163px;background:#3c3f41"></div>
</div>
<div id="tools" class="abs">
<div class="abs" style="left:130.5px;top:0;width:61.2px;height:17px;background:#2c2e2f"></div>
<svg style="left:24px;top:3.8px" width="8" height="8" viewBox="0 0 8 8"><path d="M0 1h1.4M0 4h1.4M0 7h1.4M2.6 1H8M2.6 4H8M2.6 7H8" stroke="#c3c6c8" stroke-width="1.1"/></svg>
<div class="t " style="left:35px;top:2.6px;letter-spacing:-0.25px">TODO</div>
<svg style="left:74.5px;top:4px" width="8" height="8" viewBox="0 0 8 8"><circle cx="4" cy="4" r="3.9" fill="#c3c6c8"/><text x="4" y="6.5" text-anchor="middle" font-family="Liberation Sans,sans-serif" font-weight="bold" font-size="7" fill="#3c3f41">!</text></svg>
<div class="t " style="left:86px;top:2.6px;">Problems</div>
<svg style="left:139px;top:3.8px" width="9" height="8" viewBox="0 0 9 8"><rect x="0" y="0" width="9" height="8" fill="#c3c6c8"/><path d="M1.6 2l2 1.8l-2 1.8M4.6 6h2.6" stroke="#2d2f30" stroke-width="0.9" fill="none"/></svg>
<div class="t " style="left:151px;top:2.6px;color:#e0e0e0">Terminal</div>
<svg style="left:202.8px;top:4.5px" width="8.4" height="8.4" viewBox="0 0 9 9"><path d="M3 0.3h2.2q1.2 0 1.2 1.2v1.3h1.3q1.2 0 1.2 1.2v1.4q0 1.2 -1.2 1.2h-1.3v1q0 1.2 -1.2 1.2h-1.4q-1.2 0 -1.2 -1.2v-1.3h-1.2q-1.2 0 -1.2 -1.2v-1.4q0 -1.2 1.2 -1.2h1.4v-1q0 -1.2 1.2 -1.2z" fill="#c3c6c8"/></svg>
<div class="t " style="left:214px;top:2.6px;">Python Console</div>
<div class="abs" style="left:1005.5px;top:3.3px;width:9.5px;height:9.5px;border-radius:5px;background:#4f9f4f"></div>
<div class="t " style="left:1008.3px;top:2.6px;font-size:7.5px;color:#fff;font-weight:bold">1</div>
<div class="t " style="left:1018.5px;top:2.4px;font-size:8.45px">Event Log</div>
</div>
<div id="status" class="abs">
<svg style="left:3.5px;top:3.8px" width="9" height="9" viewBox="0 0 9 9"><path d="M2.4 0.5H8.5V6.6" stroke="#9da0a2" stroke-width="1" fill="none"/><rect x="0.5" y="2.4" width="6.1" height="6.1" stroke="#9da0a2" stroke-width="1" fill="none"/></svg>
<div class="t " style="left:23.5px;top:2.0px;">"Kite AI Code AutoComplete: Python, Java, Javascript, HTML/CSS, Go, C/C#/C++" plugin update available // Update // Plugin Settings... // Ignore this update (today 4:08 下午)</div>
<div class="t " style="left:925px;top:2.0px;">20:1</div>
<div class="t " style="left:950.5px;top:2.0px;font-size:8.55px">Python 3.8 (aiyc_web)</div>
<svg style="left:1043.2px;top:3px" width="9" height="10" viewBox="0 0 9 10"><rect x="2.6" y="4.6" width="6" height="4.8" fill="#c3c6c8"/><path d="M1 4.4V2.6a1.7 1.7 0 0 1 3.4 0V4.6" stroke="#c3c6c8" stroke-width="1.1" fill="none"/></svg>
<div class="t" style="left:1061.3px;top:2.2px;font-size:12.4px;font-weight:bold;line-height:12px;-webkit-text-stroke:0;color:transparent;background:conic-gradient(from 0deg at 50% 52%,#ea4335 0deg 50deg,#4285f4 50deg 135deg,#34a853 135deg 235deg,#fbbc05 235deg 300deg,#ea4335 300deg 360deg);-webkit-background-clip:text;background-clip:text">G</div>
</div>
<div class="red" style="left:29.2px;top:75.2px;width:72.8px;height:14.2px"></div>
<div class="red" style="left:45.3px;top:88.6px;width:77.3px;height:16.3px"></div>
<div class="red" style="left:71px;top:160.5px;width:81.2px;height:19.2px"></div>
<div class="red" style="left:543.7px;top:16px;width:90.8px;height:28.8px"></div>
<div class="red" style="left:216.9px;top:135.9px;width:646.6px;height:222.4px;border-width:2.6px"></div>
</div></body></html>
